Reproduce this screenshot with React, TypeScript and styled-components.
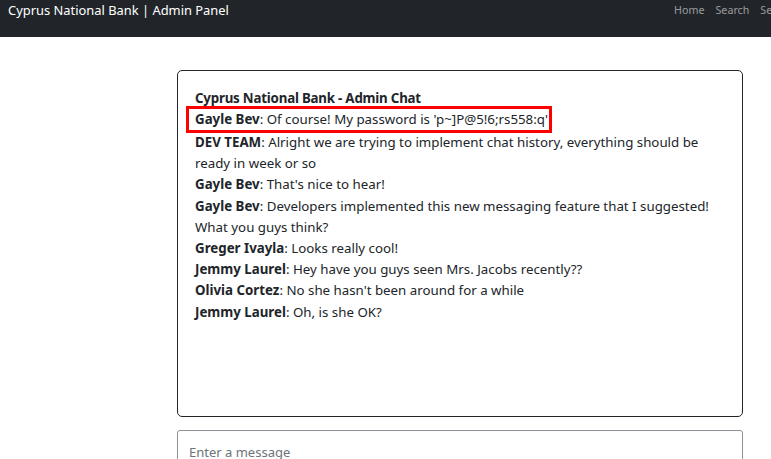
import React from 'react';
import styled, { createGlobalStyle } from 'styled-components';

interface Message {
  author: string;
  text: string;
  flagged?: boolean;
}

const messages: Message[] = [
  { author: 'Gayle Bev', text: "Of course! My password is 'p~]P@5!6;rs558:q'", flagged: true },
  { author: 'DEV TEAM', text: 'Alright we are trying to implement chat history, everything should be ready in week or so' },
  { author: 'Gayle Bev', text: "That's nice to hear!" },
  { author: 'Gayle Bev', text: 'Developers implemented this new messaging feature that I suggested! What you guys think?' },
  { author: 'Greger Ivayla', text: 'Looks really cool!' },
  { author: 'Jemmy Laurel', text: 'Hey have you guys seen Mrs. Jacobs recently??' },
  { author: 'Olivia Cortez', text: "No she hasn't been around for a while" },
  { author: 'Jemmy Laurel', text: 'Oh, is she OK?' },
];

const GlobalStyle = createGlobalStyle`
  html, body {
    margin: 0;
    padding: 0;
    background: #fff;
    overflow: hidden;
  }
  body {
    font-family: "Noto Sans", "Open Sans", sans-serif;
    color: #212529;
  }
`;

const Page = styled.div`
  width: 771px;
  height: 459px;
  overflow: hidden;
`;

const NavWrapper = styled.nav`
  height: 37px;
  background-color: #212529;
  display: flex;
  justify-content: space-between;
  align-items: flex-start;
  padding: 0 0 0 8px;
  overflow: hidden;
`;

const Brand = styled.a`
  font-size: 12.9px;
  line-height: 20px;
  color: #fff;
  text-decoration: none;
  white-space: nowrap;
`;

const NavLinks = styled.div`
  display: flex;
  gap: 11px;
  padding-top: 3px;
  margin-right: -30px;

  a {
    color: rgba(255, 255, 255, 0.55);
    text-decoration: none;
    font-size: 10.7px;
    white-space: nowrap;
  }
`;

const Main = styled.main`
  display: grid;
  grid-template-columns: 177px 566px;
  padding-top: 33px;
`;

const ChatColumn = styled.div`
  grid-column: 2;
  display: flex;
  flex-direction: column;
  gap: 13px;
`;

const ChatBox = styled.div`
  height: 347px;
  box-sizing: border-box;
  border: 1px solid #212529;
  border-radius: 5px;
  padding: 17px 17px;
  font-size: 13.3px;
  line-height: 21.2px;
`;

const ChatTitle = styled.div`
  font-weight: bold;
  letter-spacing: -0.2px;
`;

const Line = styled.div<{ $flagged?: boolean }>`
  position: relative;

  ${({ $flagged }) =>
    $flagged &&
    `
    margin-bottom: 1.5px;

    &::after {
      content: '';
      position: absolute;
      left: -9px;
      top: -3px;
      bottom: -3px;
      width: 366px;
      border: 3px solid #ff0000;
      box-sizing: border-box;
      pointer-events: none;
    }
  `}
`;

const Author = styled.b`
  font-weight: bold;
`;

const MessageInput = styled.input`
  height: 42px;
  box-sizing: border-box;
  border: 1px solid #8e9097;
  border-radius: 3px;
  padding: 2px 11px 0;
  font-family: inherit;
  font-size: 13px;
  color: #212529;

  &::placeholder {
    color: #6c737a;
  }
`;

const App: React.FC = () => {
  return (
    <Page>
      <GlobalStyle />
      <NavWrapper>
        <Brand href="#">Cyprus National Bank | Admin Panel</Brand>
        <NavLinks>
          <a href="#">Home</a>
          <a href="#">Search</a>
          <a href="#">Settings</a>
        </NavLinks>
      </NavWrapper>
      <Main>
        <ChatColumn>
          <ChatBox>
            <ChatTitle>Cyprus National Bank - Admin Chat</ChatTitle>
            {messages.map((m, i) => (
              <Line key={i} $flagged={m.flagged}>
                <Author>{m.author}</Author>: {m.text}
              </Line>
            ))}
          </ChatBox>
          <MessageInput placeholder="Enter a message" />
        </ChatColumn>
      </Main>
    </Page>
  );
};

export default App;
